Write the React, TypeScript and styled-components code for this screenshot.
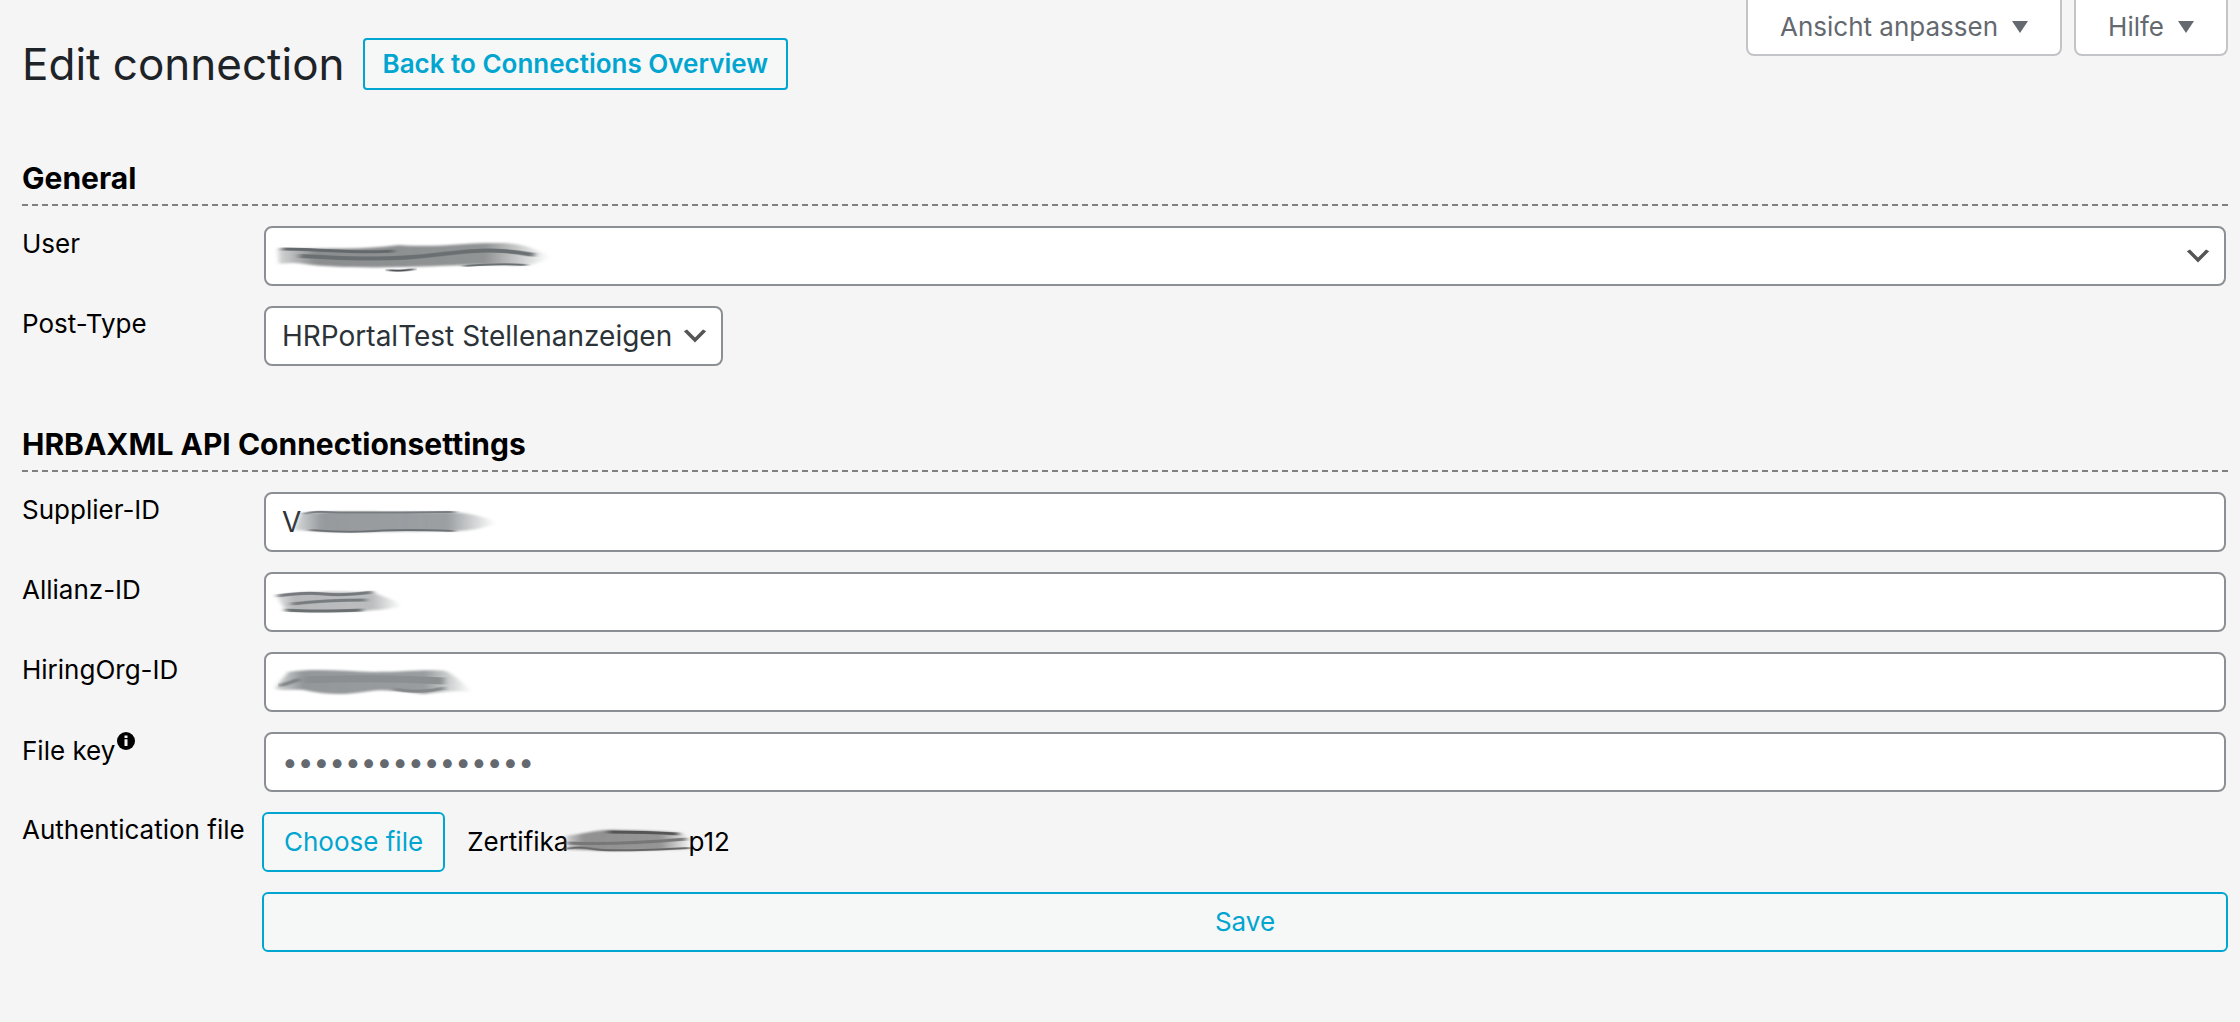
import React, { useRef } from "react";
import styled, { createGlobalStyle, css } from "styled-components";

const GlobalStyle = createGlobalStyle`
  *, *::before, *::after { box-sizing: border-box; }
  body {
    margin: 0;
    background: #f5f5f5;
    color: #000;
    font: 400 26px/36px Inter, "Liberation Sans", sans-serif;
  }
  button, input, select { font: inherit; margin: 0; }
`;

const Page = styled.div`
  padding: 0 12px 70px 22px;
`;

const Header = styled.header`
  display: flex;
  justify-content: space-between;
  align-items: flex-start;
  margin-bottom: 10px;
`;

const TitleGroup = styled.div`
  display: flex;
  align-items: center;
  gap: 18px;
  padding-top: 38px;
`;

const Title = styled.h1`
  margin: 0;
  color: #1d2327;
  font-size: 44px;
  font-weight: 400;
  line-height: 52px;
`;

const accent = css`
  border: 2px solid #00a5d0;
  background: #f6f7f7;
  color: #00a5d0;
`;

const BackLink = styled.a`
  ${accent}
  height: 52px;
  padding: 0 18px;
  border-radius: 4px;
  font-weight: 600;
  line-height: 48px;
  text-decoration: none;
`;

const ScreenTabs = styled.div`
  display: flex;
  gap: 12px;
`;

const ScreenTab = styled.button`
  display: flex;
  align-items: center;
  gap: 14px;
  height: 56px;
  padding: 0 32px;
  border: 2px solid #c3c4c7;
  border-top: 0;
  border-radius: 0 0 8px 8px;
  background: #fff;
  color: #646970;
`;

const Section = styled.section`
  display: grid;
  gap: 20px;
  padding-top: 58px;
`;

const SectionTitle = styled.h2`
  margin: 0;
  padding-bottom: 6px;
  border-bottom: 2px dashed #808080;
  font-size: 30px;
  font-weight: 700;
  line-height: 40px;
`;

const Row = styled.div`
  display: grid;
  grid-template-columns: 240px 1fr;
`;

const RowLabel = styled.label`
  white-space: nowrap;
`;

const Field = styled.div<{ $fit?: boolean }>`
  display: grid;
  justify-self: ${(p) => (p.$fit ? "start" : "stretch")};
  margin: 0 2px;

  > * { grid-area: 1 / 1; }
  > svg { pointer-events: none; }
`;

const box = css`
  width: 100%;
  height: 60px;
  border: 2px solid #8c8f94;
  border-radius: 8px;
  background: #fff;
  color: #2c3338;
  font-size: 28px;
`;

const TextInput = styled.input`
  ${box}
  padding: 0 16px;

  &::placeholder { color: #646970; opacity: 1; }
`;

const Select = styled.select`
  ${box}
  appearance: none;
  padding: 0 48px 0 16px;
`;

const Chevron = styled.svg`
  align-self: center;
  justify-self: end;
  width: 32px;
  height: 32px;
  margin-right: 12px;
`;

const Hint = styled.svg`
  width: 18px;
  height: 18px;
  margin-left: 2px;
  vertical-align: 10px;
`;

const FileField = styled.div`
  display: flex;
  align-items: center;
  gap: 22px;
`;

const FileName = styled.span`
  display: flex;
  align-items: center;
`;

const FileSmudge = styled.svg`
  width: 140px;
  height: 36px;
  margin: 0 -10px;
`;

const Button = styled.button`
  ${accent}
  height: 60px;
  padding: 0 20px;
  border-radius: 6px;
`;

const SaveButton = styled(Button)`
  grid-column: 2;
`;

const Triangle = () => (
  <svg width="16" height="12" viewBox="0 0 16 12" aria-hidden="true">
    <path d="M0 0h16L8 12z" fill="#646970" />
  </svg>
);

const SelectChevron = () => (
  <Chevron viewBox="0 0 20 20" aria-hidden="true">
    <path d="M5 6l5 5 5-5 2 1-7 7-7-7 2-1z" fill="#555" />
  </Chevron>
);

type Streak = { d: string; w: number; c: string };

/* A smeared pencil stroke that covers a private value. */
const SmudgeInk = ({ id, body, tone, streaks }: { id: string; body: string; tone: string; streaks: Streak[] }) => (
  <>
    <defs>
      <linearGradient id={`${id}-fade`} x1="0" x2="1" y1="0" y2="0">
        <stop offset="0" stopColor={tone} stopOpacity="0.35" />
        <stop offset="0.14" stopColor={tone} stopOpacity="0.95" />
        <stop offset="0.76" stopColor={tone} stopOpacity="0.9" />
        <stop offset="1" stopColor={tone} stopOpacity="0" />
      </linearGradient>
      <filter id={`${id}-soft`} x="-10%" y="-40%" width="120%" height="180%">
        <feGaussianBlur stdDeviation="2 1" />
      </filter>
      <filter id={`${id}-line`} x="-10%" y="-200%" width="120%" height="500%">
        <feGaussianBlur stdDeviation="3 0.7" />
      </filter>
    </defs>
    <path d={body} fill={`url(#${id}-fade)`} filter={`url(#${id}-soft)`} />
    {streaks.map((s) => (
      <path key={s.d} d={s.d} fill="none" stroke={s.c} strokeWidth={s.w} filter={`url(#${id}-line)`} />
    ))}
  </>
);

const UserSmudge = () => (
  <svg width="300" height="60" viewBox="0 0 300 60" aria-hidden="true">
    <SmudgeInk
      id="user"
      tone="#858889"
      body="M14 23 C60 22 100 24 135 19 C180 22 200 16 230 17 C258 16 275 24 286 31 C275 38 262 41 240 39 C200 38 170 41 140 41 C100 42 60 41 40 38 C28 36 18 38 15 38 Z"
      streaks={[
        { d: "M18 23 C55 23 95 28 130 25", w: 3, c: "#64696c" },
        { d: "M36 30 C90 33 130 34 170 29 S235 22 270 29", w: 4, c: "#6a6f72" },
        { d: "M124 44 Q137 46 150 43", w: 2, c: "#4d5458" },
        { d: "M200 40 Q235 37 262 39", w: 2, c: "#6a6f72" },
      ]}
    />
  </svg>
);

const SupplierSmudge = () => (
  <svg width="300" height="60" viewBox="0 0 300 60" aria-hidden="true">
    <SmudgeInk
      id="supplier"
      tone="#919598"
      body="M36 22 C60 18 120 21 190 20 C210 22 225 26 232 31 C222 36 205 39 190 39 C140 39 100 40 76 40 C55 39 45 39 30 38 Z"
      streaks={[
        { d: "M40 22 Q50 19 62 20 T190 20", w: 2, c: "#777c80" },
        { d: "M46 38 Q80 41 110 39 T190 39", w: 2, c: "#6c7175" },
        { d: "M120 30 L165 30", w: 2, c: "#7d8286" },
      ]}
    />
  </svg>
);

const AllianzSmudge = () => (
  <svg width="300" height="60" viewBox="0 0 300 60" aria-hidden="true">
    <SmudgeInk
      id="allianz"
      tone="#b3b5b7"
      body="M12 24 C40 18 80 20 106 20 C120 24 135 30 138 34 C125 38 110 38 98 39 C70 40 40 40 22 39 C18 34 16 28 12 24 Z"
      streaks={[
        { d: "M14 24 Q40 20 60 22 T108 20", w: 3, c: "#74787b" },
        { d: "M28 32 Q60 28 102 28", w: 3, c: "#777b7e" },
        { d: "M22 38 Q50 40 98 38", w: 3, c: "#6b6f72" },
      ]}
    />
  </svg>
);

const OrgSmudge = () => (
  <svg width="300" height="60" viewBox="0 0 300 60" aria-hidden="true">
    <SmudgeInk
      id="org"
      tone="#8e9294"
      body="M24 20 C50 16 80 19 110 20 C140 20 165 17 182 19 C195 26 202 34 208 40 C190 38 175 40 160 42 C140 40 120 36 100 40 C80 43 60 43 40 38 C30 37 20 39 11 37 C14 30 20 26 24 20 Z"
      streaks={[
        { d: "M16 34 L36 27", w: 3, c: "#777c7f" },
        { d: "M40 28 Q110 25 180 29", w: 7, c: "#8b8f91" },
        { d: "M130 37 Q155 42 180 36", w: 3, c: "#84888a" },
      ]}
    />
  </svg>
);

const CertificateSmudge = () => (
  <FileSmudge viewBox="0 0 140 36" aria-hidden="true">
    <SmudgeInk
      id="file"
      tone="#8b8b8b"
      body="M8 12 C25 10 40 5 60 6 C90 7 110 7 124 9 C132 14 134 20 132 26 C110 25 70 27 50 27 C35 26 20 26 10 26 Z"
      streaks={[
        { d: "M50 8 Q90 8 120 10", w: 3, c: "#555" },
        { d: "M10 19 Q60 21 128 15", w: 3, c: "#777" },
        { d: "M8 25 Q20 22 35 25 T132 24", w: 2, c: "#666" },
      ]}
    />
  </FileSmudge>
);

export default function App() {
  const fileRef = useRef<HTMLInputElement>(null);

  return (
    <>
      <GlobalStyle />
      <Page>
        <Header>
          <TitleGroup>
            <Title>Edit connection</Title>
            <BackLink href="#connections">Back to Connections Overview</BackLink>
          </TitleGroup>
          <ScreenTabs>
            <ScreenTab type="button">Ansicht anpassen<Triangle /></ScreenTab>
            <ScreenTab type="button">Hilfe<Triangle /></ScreenTab>
          </ScreenTabs>
        </Header>

        <form onSubmit={(e) => e.preventDefault()}>
          <Section>
            <SectionTitle>General</SectionTitle>
            <Row>
              <RowLabel htmlFor="user">User</RowLabel>
              <Field>
                <Select id="user"><option value="" /></Select>
                <UserSmudge />
                <SelectChevron />
              </Field>
            </Row>
            <Row>
              <RowLabel htmlFor="post-type">Post-Type</RowLabel>
              <Field $fit>
                <Select id="post-type"><option>HRPortalTest Stellenanzeigen</option></Select>
                <SelectChevron />
              </Field>
            </Row>
          </Section>

          <Section>
            <SectionTitle>HRBAXML API Connectionsettings</SectionTitle>
            <Row>
              <RowLabel htmlFor="supplier">Supplier-ID</RowLabel>
              <Field>
                <TextInput id="supplier" defaultValue="V" />
                <SupplierSmudge />
              </Field>
            </Row>
            <Row>
              <RowLabel htmlFor="allianz">Allianz-ID</RowLabel>
              <Field>
                <TextInput id="allianz" />
                <AllianzSmudge />
              </Field>
            </Row>
            <Row>
              <RowLabel htmlFor="hiring-org">HiringOrg-ID</RowLabel>
              <Field>
                <TextInput id="hiring-org" />
                <OrgSmudge />
              </Field>
            </Row>
            <Row>
              <RowLabel htmlFor="file-key">
                File key
                <Hint viewBox="0 0 18 18" aria-hidden="true">
                  <circle cx="9" cy="9" r="9" />
                  <path d="M7.5 3.5h3v2.4h-3zM7.5 7.2h3v6.8h-3z" fill="#f5f5f5" />
                </Hint>
              </RowLabel>
              <Field>
                <TextInput id="file-key" type="password" placeholder="••••••••••••••••" />
              </Field>
            </Row>
            <Row>
              <RowLabel htmlFor="auth-file">Authentication file</RowLabel>
              <FileField>
                <input id="auth-file" ref={fileRef} type="file" hidden />
                <Button type="button" onClick={() => fileRef.current?.click()}>Choose file</Button>
                <FileName>Zertifika<CertificateSmudge />p12</FileName>
              </FileField>
            </Row>
            <Row>
              <SaveButton type="submit">Save</SaveButton>
            </Row>
          </Section>
        </form>
      </Page>
    </>
  );
}
